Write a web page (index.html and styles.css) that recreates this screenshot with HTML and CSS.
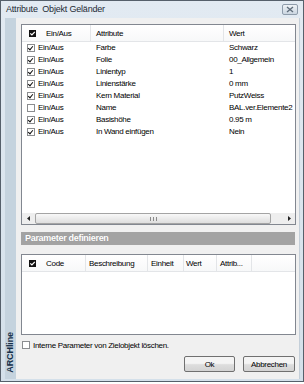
FILE: index.html
```html
<!DOCTYPE html>
<html lang="de">
<head>
    <meta charset="UTF-8">
    <title>Attribute Objekt Geländer</title>
    <link rel="stylesheet" href="styles.css">
</head>
<body>
<div class="window">
    <div class="titlebar">
        <span class="title">Attribute&nbsp; Objekt Geländer</span>
        <span class="close">
            <svg width="8" height="7" viewBox="0 0 8 7"><path d="M1 1 L7 6 M7 1 L1 6" stroke="#5f6d7b" stroke-width="1.4"/></svg>
        </span>
    </div>
    <div class="frame">
        <div class="client">
            <div class="strip"><span class="brand">ARCHline</span></div>
            <div class="content">
                <div class="listbox attrs">
                    <div class="head attr-grid">
                        <div class="hcell first">
                            <svg class="hcheck" width="7" height="7" viewBox="0 0 7 7"><rect width="7" height="7" fill="#111"/><path d="M1.3 3.4 L2.9 5 L5.8 1.8" stroke="#fff" stroke-width="1.2" fill="none"/></svg>
                            <span>Ein/Aus</span>
                        </div>
                        <div class="hcell">Attribute</div>
                        <div class="hcell">Wert</div>
                    </div>
                    <div class="rows">
                        <div class="row attr-grid"><div class="cell first"><i class="cb on"></i>Ein/Aus</div><div class="cell">Farbe</div><div class="cell">Schwarz</div></div>
                        <div class="row attr-grid"><div class="cell first"><i class="cb on"></i>Ein/Aus</div><div class="cell">Folie</div><div class="cell">00_Allgemein</div></div>
                        <div class="row attr-grid"><div class="cell first"><i class="cb on"></i>Ein/Aus</div><div class="cell">Linientyp</div><div class="cell">1</div></div>
                        <div class="row attr-grid"><div class="cell first"><i class="cb on"></i>Ein/Aus</div><div class="cell">Linienstärke</div><div class="cell">0 mm</div></div>
                        <div class="row attr-grid"><div class="cell first"><i class="cb on"></i>Ein/Aus</div><div class="cell">Kern Material</div><div class="cell">PutzWeiss</div></div>
                        <div class="row attr-grid"><div class="cell first"><i class="cb"></i>Ein/Aus</div><div class="cell">Name</div><div class="cell">BAL.ver.Elemente2</div></div>
                        <div class="row attr-grid"><div class="cell first"><i class="cb on"></i>Ein/Aus</div><div class="cell">Basishöhe</div><div class="cell">0.95 m</div></div>
                        <div class="row attr-grid"><div class="cell first"><i class="cb on"></i>Ein/Aus</div><div class="cell">In Wand einfügen</div><div class="cell">Nein</div></div>
                    </div>
                    <div class="hscroll">
                        <span class="arrow"><svg width="3" height="5" viewBox="0 0 3 5"><path d="M3 0 L0 2.5 L3 5 Z" fill="#222"/></svg></span>
                        <div class="track">
                            <div class="thumb"><span class="grip"></span></div>
                        </div>
                        <span class="arrow"><svg width="3" height="5" viewBox="0 0 3 5"><path d="M0 0 L3 2.5 L0 5 Z" fill="#222"/></svg></span>
                    </div>
                </div>

                <div class="section-bar">Parameter definieren</div>

                <div class="listbox params">
                    <div class="head param-grid">
                        <div class="hcell first">
                            <svg class="hcheck" width="7" height="7" viewBox="0 0 7 7"><rect width="7" height="7" fill="#111"/><path d="M1.3 3.4 L2.9 5 L5.8 1.8" stroke="#fff" stroke-width="1.2" fill="none"/></svg>
                            <span>Code</span>
                        </div>
                        <div class="hcell">Beschreibung</div>
                        <div class="hcell">Einheit</div>
                        <div class="hcell narrow">Wert</div>
                        <div class="hcell">Attrib...</div>
                        <div class="hcell"></div>
                    </div>
                </div>

                <label class="check-line"><i class="cb"></i>Interne Parameter von Zielobjekt löschen.</label>

                <div class="buttons">
                    <button type="button" class="btn ok">Ok</button>
                    <button type="button" class="btn">Abbrechen</button>
                </div>
            </div>
        </div>
    </div>
</div>
</body>
</html>
```

FILE: styles.css
```css
body {
    margin: 0;
    background-color: #fff;
    font-family: "Liberation Sans", Arial, sans-serif;
}
.window {
    width: 302px;
    height: 380px;
    border: 1px solid #56606b;
    background: linear-gradient(#e2eaf2, #d4e0ea);
    display: flex;
    flex-direction: column;
}
.titlebar {
    height: 17px;
    display: flex;
    align-items: flex-start;
    justify-content: space-between;
}
.title {
    padding-left: 5px;
    line-height: 17px;
    font-size: 9px;
    letter-spacing: -0.2px;
    color: #1e2a36;
}
.close {
    width: 14px;
    height: 9px;
    margin: 3px 5px 0 0;
    border: 1px solid #8e9cab;
    border-radius: 2px;
    background: linear-gradient(#eef2f6, #cbd6e1);
    display: flex;
    align-items: center;
    justify-content: center;
}
.frame {
    flex: 1;
    display: flex;
    padding: 0 3px 2px 4px;
}
.client {
    flex: 1;
    display: flex;
    background-color: #f0f0f0;
    border-right: 1px solid #c4cfd9;
}
.strip {
    width: 11px;
    background-color: #c5d3de;
    display: flex;
    flex-direction: column;
    justify-content: flex-end;
    align-items: center;
    padding-bottom: 6px;
}
.brand {
    writing-mode: vertical-rl;
    transform: rotate(180deg);
    font-size: 9px;
    font-weight: bold;
    letter-spacing: -0.1px;
    color: #16304a;
    line-height: 11px;
}
.content {
    flex: 1;
    display: flex;
    flex-direction: column;
    padding: 6px 3px 0 5px;
    font-size: 8px;
    letter-spacing: -0.3px;
    color: #000;
}
.listbox {
    border: 1px solid #828790;
    background-color: #fff;
    display: flex;
    flex-direction: column;
}
.attrs {
    height: 199px;
}
.params {
    height: 79px;
    margin-top: 9px;
}
.attr-grid {
    display: grid;
    grid-template-columns: 69px 133px 1fr;
}
.param-grid {
    display: grid;
    grid-template-columns: 64px 62px 36px 33px 35px 1fr;
}
.head {
    height: 16px;
    border-bottom: 1px solid #e3e5e8;
    background: linear-gradient(#fff, #f7f8f9);
}
.hcell {
    display: flex;
    align-items: center;
    padding-left: 5px;
    border-right: 1px solid #e3e5e8;
    white-space: nowrap;
    overflow: hidden;
}
.hcell:last-child {
    border-right: none;
}
.param-grid .hcell {
    padding-left: 3px;
}
.param-grid .hcell.narrow {
    padding-left: 2px;
}
.hcell.first {
    padding-left: 7px;
}
.param-grid .hcell.first {
    padding-left: 7px;
}
.hcheck {
    margin-right: 10px;
}
.rows {
    flex: 1;
}
.row {
    height: 12px;
    line-height: 12px;
}
.cell {
    padding-left: 5px;
    white-space: nowrap;
}
.cell.first {
    display: flex;
    align-items: center;
}
.cb {
    width: 6px;
    height: 6px;
    border: 1px solid #8b8d90;
    background-color: #fff;
    margin-right: 3px;
    position: relative;
    flex-shrink: 0;
}
.cb.on::after {
    content: "";
    position: absolute;
    left: 1px;
    top: 0px;
    width: 2px;
    height: 4px;
    border: solid #111;
    border-width: 0 1.4px 1.4px 0;
    transform: rotate(40deg);
}
.hscroll {
    height: 11px;
    display: flex;
    align-items: stretch;
    background-color: #eeeeee;
}
.arrow {
    width: 12px;
    display: flex;
    align-items: center;
    justify-content: center;
}
.track {
    flex: 1;
    display: flex;
    padding: 0 10px 0 1px;
}
.thumb {
    width: 234px;
    border: 1px solid #a4a4a4;
    border-radius: 2px;
    background: linear-gradient(#f8f8f8, #dedede);
    display: flex;
    align-items: center;
    justify-content: center;
}
.grip {
    width: 5px;
    height: 4px;
    border-left: 1px solid #8a8a8a;
    border-right: 1px solid #8a8a8a;
    position: relative;
}
.grip::after {
    content: "";
    position: absolute;
    left: 2px;
    top: 0;
    width: 1px;
    height: 4px;
    background-color: #8a8a8a;
}
.section-bar {
    margin-top: 7px;
    height: 13px;
    line-height: 13px;
    background-color: #a3a3a3;
    color: #fff;
    font-weight: bold;
    font-size: 9px;
    letter-spacing: -0.3px;
    padding-left: 4px;
    margin-right: 1px;
    text-shadow: 0 0 1px #8a8a8a;
}
.check-line {
    margin-top: 5px;
    height: 10px;
    display: flex;
    align-items: center;
    padding-left: 1px;
    white-space: nowrap;
}
.check-line .cb {
    margin-right: 3px;
}
.buttons {
    margin-top: 6px;
    display: flex;
    justify-content: flex-end;
    gap: 8px;
    padding-right: 1px;
}
.btn {
    height: 16px;
    width: 52px;
    padding: 0;
    border: 1px solid #707070;
    border-radius: 2px;
    background: linear-gradient(#f4f4f4 45%, #dddddd 55%, #d3d3d3);
    font-family: "Liberation Sans", Arial, sans-serif;
    font-size: 8px;
    letter-spacing: -0.3px;
    color: #000;
}
.btn.ok {
    width: 51px;
}
```
